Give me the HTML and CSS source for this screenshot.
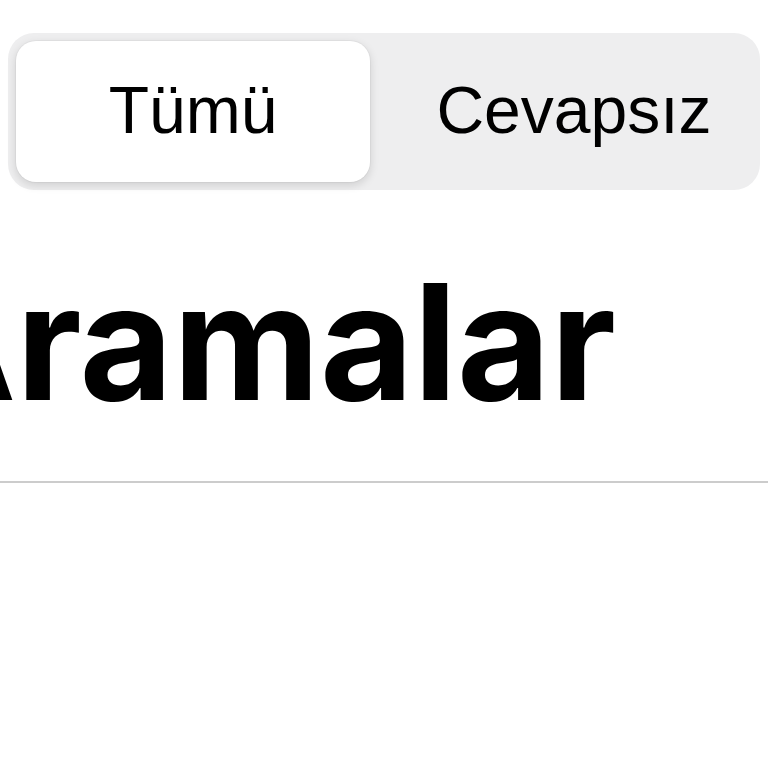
FILE: index.html
```html
<!DOCTYPE html>
<html lang="tr">
<head>
<meta charset="utf-8">
<link rel="stylesheet" href="styles.css">
</head>
<body>
<div class="page">
  <div class="segmented">
    <div class="seg seg-active">Tümü</div>
    <div class="seg seg-plain">Cevapsız</div>
  </div>
  <h1 class="title">Aramalar</h1>
  <div class="divider"></div>
</div>
</body>
</html>
```
FILE: styles.css
```css
html, body {
  margin: 0;
  padding: 0;
  background: #ffffff;
}
.page {
  width: 768px;
  height: 768px;
  overflow: hidden;
  font-family: "Liberation Sans", Arial, sans-serif;
  color: #000;
}
.segmented {
  margin: 33px 8px 0 8px;
  height: 157px;
  box-sizing: border-box;
  padding: 8px;
  background: #eeeeef;
  border-radius: 26px;
  display: flex;
}
.seg {
  flex: 1;
  display: flex;
  align-items: center;
  justify-content: center;
  font-size: 66px;
  line-height: 1;
  padding-bottom: 3px;
}
.seg-active {
  flex: 0 0 354px;
  background: #ffffff;
  border-radius: 20px;
  box-shadow: 0 3px 10px rgba(0,0,0,0.14), 0 0 0 1px rgba(0,0,0,0.03);
}
.seg-plain {
  padding-left: 26px;
}
.title {
  margin: 71px 0 0 -104px;
  font-family: Inter, "Liberation Sans", sans-serif;
  font-size: 161px;
  line-height: 161px;
  font-weight: 700;
  white-space: nowrap;
}
.divider {
  margin-top: 59px;
  height: 2px;
  background: #cccccc;
}
```
